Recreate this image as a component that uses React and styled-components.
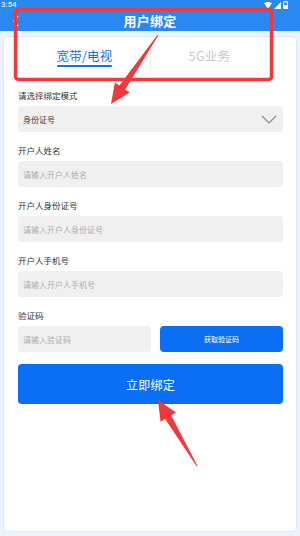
import React from "react";
import styled, { createGlobalStyle } from "styled-components";

const Global = createGlobalStyle`
  html, body { margin: 0; padding: 0; }
  body {
    font-family: "Noto Sans CJK SC", "Noto Sans", sans-serif;
    background: #eaf3fe;
  }
`;

const Page = styled.div`
  position: relative;
  width: 300px;
  height: 536px;
  overflow: hidden;
  background: #eaf3fe;
  display: flex;
  flex-direction: column;
`;

const TopBar = styled.div`
  background: #2a89f1;
  color: #fff;
  height: 31px;
  display: flex;
  flex-direction: column;
`;

const StatusRow = styled.div`
  height: 10px;
  display: flex;
  align-items: center;
  justify-content: space-between;
  padding: 0 12px 0 1px;
  font-family: "Roboto", "Liberation Sans", sans-serif;
  font-size: 8px;
  line-height: 10px;
`;

const StatusIcons = styled.div`
  display: flex;
  align-items: center;
  gap: 2px;
`;

const TitleRow = styled.div`
  position: relative;
  flex: 1;
  display: flex;
  align-items: center;
  justify-content: center;
`;

const Back = styled.span`
  position: absolute;
  left: 13px;
  top: 5px;
  display: flex;
`;

const Title = styled.h1`
  margin: 0;
  font-size: 13px;
  font-weight: 700;
  line-height: 16px;
  letter-spacing: 0.3px;
`;

const Card = styled.div`
  margin: 6px 4px 0;
  height: 494px;
  background: #fff;
  border-radius: 4px;
  box-shadow: 0 0 0 1px #dde9fa;
  display: flex;
  flex-direction: column;
`;

const Tabs = styled.div`
  height: 41px;
  padding-left: 15px;
  display: grid;
  grid-template-columns: 131px 1px 117px;
`;

const Tab = styled.div`
  display: flex;
  justify-content: center;
  align-items: flex-start;
  padding-top: 11px;
`;

const TabLabel = styled.span`
  position: relative;
  font-size: 12.5px;
  line-height: 16px;
  color: ${(p) => (p.$active ? "#1b6fdc" : "#c9c9c9")};
  letter-spacing: 0.2px;
  &::after {
    content: "";
    display: ${(p) => (p.$active ? "block" : "none")};
    position: absolute;
    left: 0;
    right: 0;
    bottom: -3px;
    height: 2px;
    background: #1b6fdc;
    border-radius: 1px;
  }
`;

const Divider = styled.div`
  width: 1px;
  height: 26px;
  background: #ebebeb;
  margin-top: 7px;
`;

const Form = styled.div`
  padding: 11px 13px 0 14px;
  display: flex;
  flex-direction: column;
  gap: 12px;
`;

const Field = styled.div`
  display: flex;
  flex-direction: column;
  gap: 5px;
`;

const Label = styled.label`
  font-size: 8.5px;
  line-height: 12px;
  height: 12px;
  color: #333;
`;

const Box = styled.div`
  height: 26px;
  background: #f0f0f0;
  border-radius: 4px;
  display: flex;
  align-items: center;
  justify-content: space-between;
  padding: 0 6px 0 5px;
  font-size: 8px;
  color: ${(p) => (p.$filled ? "#3a3a3a" : "#adadad")};
  box-sizing: border-box;
`;

const CodeRow = styled.div`
  display: grid;
  grid-template-columns: 133px 123px;
  justify-content: space-between;
`;

const SmallButton = styled.button`
  height: 26px;
  border: none;
  border-radius: 4px;
  background: #0a6ff5;
  color: #fff;
  font-family: inherit;
  font-size: 7px;
  padding: 0;
`;

const BigButton = styled.button`
  height: 40px;
  border: none;
  border-radius: 4px;
  background: #0a6ff5;
  color: #fff;
  font-family: inherit;
  font-size: 12px;
  letter-spacing: 0.3px;
  padding: 0;
`;

const Overlay = styled.svg`
  position: absolute;
  left: 0;
  top: 0;
  width: 300px;
  height: 536px;
  pointer-events: none;
`;

function Chevron() {
  return (
    <svg width="16" height="9" viewBox="0 0 16 9">
      <path d="M1 1 L8 8 L15 1" fill="none" stroke="#8a8a8a" strokeWidth="1.2" />
    </svg>
  );
}

export default function App() {
  return (
    <Page>
      <Global />
      <TopBar>
        <StatusRow>
          <span>3:54</span>
          <StatusIcons>
            <svg width="8" height="7" viewBox="0 0 8 7">
              <path d="M0 1 Q4 -1 8 1 L4 7 Z" fill="#fff" />
            </svg>
            <svg width="7" height="7" viewBox="0 0 7 7">
              <path d="M0 7 L7 0 L7 7 Z" fill="#fff" />
            </svg>
            <svg width="5" height="8" viewBox="0 0 5 8">
              <rect x="1.5" y="0" width="2" height="1" fill="#fff" />
              <rect x="0.5" y="1" width="4" height="7" fill="none" stroke="#fff" strokeWidth="1" />
              <rect x="1" y="4" width="3" height="4" fill="#fff" />
            </svg>
          </StatusIcons>
        </StatusRow>
        <TitleRow>
          <Back>
            <svg width="6" height="12" viewBox="0 0 6 12">
              <path d="M5 1 L1 6 L5 11" fill="none" stroke="#fff" strokeWidth="1.4" />
            </svg>
          </Back>
          <Title>用户绑定</Title>
        </TitleRow>
      </TopBar>

      <Card>
        <Tabs>
          <Tab>
            <TabLabel $active>宽带/电视</TabLabel>
          </Tab>
          <Divider />
          <Tab>
            <TabLabel>5G业务</TabLabel>
          </Tab>
        </Tabs>

        <Form>
          <Field>
            <Label>请选择绑定模式</Label>
            <Box $filled>
              <span>身份证号</span>
              <Chevron />
            </Box>
          </Field>
          <Field>
            <Label>开户人姓名</Label>
            <Box>请输入开户人姓名</Box>
          </Field>
          <Field>
            <Label>开户人身份证号</Label>
            <Box>请输入开户人身份证号</Box>
          </Field>
          <Field>
            <Label>开户人手机号</Label>
            <Box>请输入开户人手机号</Box>
          </Field>
          <Field>
            <Label>验证码</Label>
            <CodeRow>
              <Box>请输入验证码</Box>
              <SmallButton>获取验证码</SmallButton>
            </CodeRow>
          </Field>
          <BigButton>立即绑定</BigButton>
        </Form>
      </Card>

      <Overlay viewBox="0 0 300 536">
        <rect x="15.5" y="9.5" width="256" height="70" rx="3" fill="none" stroke="#f2383a" strokeWidth="3.5" />
        <polygon
          points="158.4,35.3 125.2,89.5 129.7,92.6 111,104 114.9,82.4 119.4,85.5 157.6,34.7"
          fill="#f2383a"
        />
        <polygon
          points="197.4,465.7 171.2,415.4 175.9,412.6 158,400 160.5,421.8 165.2,419 196.6,466.3"
          fill="#f2383a"
        />
      </Overlay>
    </Page>
  );
}
